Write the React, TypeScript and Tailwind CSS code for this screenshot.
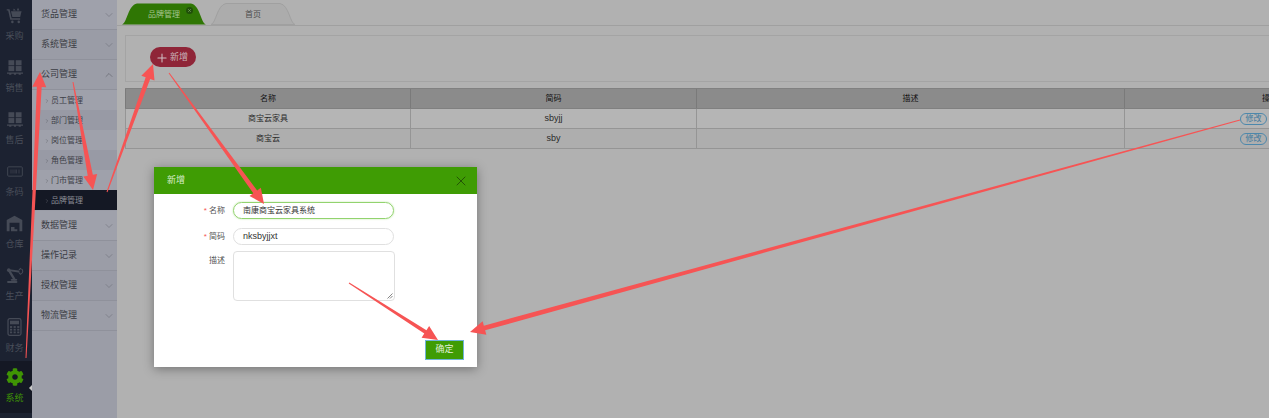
import { ChevronDown, ChevronRight, ChevronUp, Plus, X } from "lucide-react";
import { FaCog } from "react-icons/fa";

const font = { fontFamily: '"Liberation Sans", "Noto Sans CJK SC", sans-serif' };

function Cart() {
  return (
    <svg width="17" height="17" viewBox="0 0 24 24" fill="#454a56">
      <path d="M1 3h4l3 13h12v2H6L3 5H1z" />
      <path d="M7 6h15l-2 8H9zM11 2l3 3h-4zM17 1l2 4h-4z" />
      <circle cx="9" cy="21" r="1.8" />
      <circle cx="18" cy="21" r="1.8" />
    </svg>
  );
}

function Pallet() {
  return (
    <svg width="16" height="17" viewBox="0 0 22 22" fill="#454a56">
      <rect x="2" y="1" width="8" height="7" />
      <rect x="12" y="1" width="8" height="7" />
      <rect x="2" y="9" width="8" height="7" />
      <rect x="12" y="9" width="8" height="7" />
      <path d="M0 18h22v1.5H19V21h-3v-1.5H12.5V21h-3v-1.5H6V21H3v-1.5H0z" />
    </svg>
  );
}

function Barcode() {
  return (
    <svg width="16" height="13" viewBox="0 0 24 16" fill="none" stroke="#454a56">
      <rect x="1" y="1" width="22" height="14" rx="1.5" strokeWidth="1.3" />
      <path d="M6 5v6M9 5v6M12 5v6M14 5v6M18 5v6" strokeWidth="1" />
    </svg>
  );
}

function Warehouse() {
  return (
    <svg width="17" height="17" viewBox="0 0 24 24" fill="#454a56">
      <path d="M12 1 23 7v16h-4V11H5v12H1V7z" />
      <path d="M7 17h5v6H7zM12 20h4v3h-4z" />
    </svg>
  );
}

function Robot() {
  return (
    <svg width="18" height="18" viewBox="0 0 26 26" fill="none" stroke="#454a56" strokeLinecap="round">
      <path d="M4 6 12 19" strokeWidth="3.4" />
      <path d="M4 6 18 8" strokeWidth="2.8" />
      <circle cx="4" cy="6" r="2.6" fill="#454a56" strokeWidth="0" />
      <path d="M3 23h12" strokeWidth="3" />
      <path d="M8 20h7" strokeWidth="2.4" />
      <path d="M21 3.5a4.4 4.4 0 0 1 0 8.5M21 3.5l-2 2M21 12l-2-2" strokeWidth="1.5" />
    </svg>
  );
}

function Calc() {
  return (
    <svg width="15" height="18" viewBox="0 0 16 20" fill="#454a56">
      <rect x="0.8" y="0.8" width="14.4" height="18.4" rx="2" fill="none" stroke="#454a56" strokeWidth="1.4" />
      <rect x="3" y="3" width="10" height="4" />
      {[3, 7, 11].map((x) =>
        [9, 12, 15].map((y) => <rect key={`${x}-${y}`} x={x} y={y} width="2.4" height="2" />),
      )}
    </svg>
  );
}

const railItems = [
  { label: "采购", icon: <Cart /> },
  { label: "销售", icon: <Pallet /> },
  { label: "售后", icon: <Pallet /> },
  { label: "条码", icon: <Barcode /> },
  { label: "仓库", icon: <Warehouse /> },
  { label: "生产", icon: <Robot /> },
  { label: "财务", icon: <Calc /> },
];

function MenuRow({ label, open, shade }: { label: string; open?: boolean; shade: string }) {
  return (
    <div className={`flex h-[30px] items-center justify-between border-b border-[#8f919b] pl-[9px] pr-[2px] text-[9px] text-[#3a3c44] ${shade}`}>
      <span>{label}</span>
      {open ? (
        <ChevronUp size={12} strokeWidth={1.2} color="#5c5e66" />
      ) : (
        <ChevronDown size={12} strokeWidth={1.2} color="#6f717a" />
      )}
    </div>
  );
}

function SubRow({ label, active, shade }: { label: string; active?: boolean; shade: string }) {
  return (
    <div className={`flex h-5 items-center pl-[12px] pt-px text-[8px] ${active ? "bg-[#141824] text-[#8a8c94]" : `${shade} text-[#3e4048]`}`}>
      <ChevronRight size={6} strokeWidth={1.2} />
      <span className="ml-[1px]">{label}</span>
    </div>
  );
}

function Tab({ label, active }: { label: string; active?: boolean }) {
  return (
    <div className="relative flex h-[22px] w-[84px] items-center justify-center pt-px">
      <svg width="84" height="22" viewBox="0 0 84 22" className="absolute inset-0">
        <path
          d="M0 21.5C5 20.5 6 2 15 0.5H69C78 2 79 20.5 84 21.5Z"
          fill={active ? "#2f7604" : "#acacac"}
          stroke={active ? "none" : "#a0a0a0"}
        />
      </svg>
      <span className={`relative text-[8px] ${active ? "text-[#a4c48f]" : "text-[#4c4c4c]"}`}>{label}</span>
      {active && (
        <span className="absolute right-[13px] top-[4px] flex size-[7px] items-center justify-center rounded-full bg-[#20500a]">
          <X size={5} strokeWidth={2} color="#a4c48f" />
        </span>
      )}
    </div>
  );
}

function Row({ name, code }: { name: string; code: string }) {
  return (
    <div className="grid h-5 grid-cols-[286px_286px_428px_290px] items-center border-b border-[#959595] text-center text-[8px] text-[#2a2a2a]">
      <span className="flex h-full items-center justify-center border-l border-r border-[#959595]">{name}</span>
      <span className="flex h-full items-center justify-center border-r border-[#959595] text-[9px]">{code}</span>
      <span className="h-full border-r border-[#959595]" />
      <span className="flex h-full items-center pl-[115px]">
        <span className="flex h-[12px] w-[27px] items-center justify-center rounded-full border border-[#4d88ac] text-[8px] text-[#3f7a9e]">修改</span>
      </span>
    </div>
  );
}

// tapered annotation arrow, thin at the tail and thick behind the head
function Arrow({ x1, y1, x2, y2, head = 15, wing = 7, neck = 2.4 }: { x1: number; y1: number; x2: number; y2: number; head?: number; wing?: number; neck?: number }) {
  const len = Math.hypot(x2 - x1, y2 - y1);
  const ux = (x2 - x1) / len;
  const uy = (y2 - y1) / len;
  const bx = x2 - ux * head;
  const by = y2 - uy * head;
  const p = (d: number) => `${bx - uy * d},${by + ux * d}`;
  const t = (d: number) => `${x1 - uy * d},${y1 + ux * d}`;
  const points = [t(0.5), p(neck), p(wing), `${x2},${y2}`, p(-wing), p(-neck), t(-0.5)].join(" ");
  return <polygon points={points} fill="#f65454" />;
}

export default function App() {
  return (
    <div className="relative flex h-[418px] w-[1269px] overflow-hidden bg-[#b1b1b1]" style={font}>
      <aside className="flex h-full w-8 shrink-0 flex-col overflow-hidden bg-[#1c2231]">
        <div className="-mt-[3px]">
          {railItems.map((item) => (
            <div key={item.label} className="flex h-[52px] flex-col items-center justify-between pb-[7px] pr-[3px] pt-[6px] text-[9px] text-[#4a4f5a]">
              <div className="flex h-6 items-center justify-center">{item.icon}</div>
              <span className="leading-[12px]">{item.label}</span>
            </div>
          ))}
          <div className="relative flex h-[52px] flex-col items-center justify-between bg-[#141824] pb-[9px] pr-[3px] pt-[7px] text-[9px] text-[#3f9404]">
            <FaCog size={18} color="#3f9404" />
            <span className="leading-[12px]">系统</span>
            <span className="absolute right-0 top-[24px] h-0 w-0 border-y-[3px] border-r-[3px] border-y-transparent border-r-[#c8c8c8]" />
          </div>
        </div>
      </aside>

      <nav className="h-full w-[85px] shrink-0 bg-[#9b9da7]">
        <MenuRow label="货品管理" shade="bg-[#9fa1ab]" />
        <MenuRow label="系统管理" shade="bg-[#9a9ca6]" />
        <MenuRow label="公司管理" open shade="bg-[#9b9da7]" />
        <SubRow label="员工管理" shade="bg-[#9fa1ab]" />
        <SubRow label="部门管理" shade="bg-[#989aa5]" />
        <SubRow label="岗位管理" shade="bg-[#9fa1ab]" />
        <SubRow label="角色管理" shade="bg-[#989aa5]" />
        <SubRow label="门市管理" shade="bg-[#9fa1ab]" />
        <SubRow label="品牌管理" active shade="" />
        <div className="mt-px">
          <MenuRow label="数据管理" shade="bg-[#9fa1ab]" />
          <MenuRow label="操作记录" shade="bg-[#9b9da7]" />
          <MenuRow label="授权管理" shade="bg-[#989aa5]" />
          <MenuRow label="物流管理" shade="bg-[#9b9da7]" />
        </div>
      </nav>

      <main className="min-w-0 flex-1 pl-[5px]">
        <div className="-ml-[5px] flex h-[26px] items-end gap-[5px] border-b border-[#a0a0a0] pl-[5px]">
          <Tab label="品牌管理" active />
          <Tab label="首页" />
        </div>
        <div className="ml-[3px] mt-[9px] h-[47px] w-[1300px] border border-[#a4a4a4] pl-[24px] pt-[11px]">
          <div className="flex h-[20px] w-[46px] items-center rounded-full bg-[#8f2538] pl-[5px] pt-px text-[9px] text-[#c9b4b8]">
            <Plus size={14} strokeWidth={1.8} color="#d0c0c3" />
            <span className="ml-px">新增</span>
          </div>
        </div>
        <div className="ml-[3px] mt-[6px] w-[1290px]">
          <div className="grid h-[21px] grid-cols-[286px_286px_428px_290px] items-center border-b border-t border-[#808080] bg-[#8b8b8b] text-center text-[8px] text-[#111]">
            <span className="flex h-full items-center justify-center border-l border-r border-[#7a7a7a]">名称</span>
            <span className="flex h-full items-center justify-center border-r border-[#7a7a7a]">简码</span>
            <span className="flex h-full items-center justify-center border-r border-[#7a7a7a]">描述</span>
            <span>操作</span>
          </div>
          <div className="bg-[#b5b5b5]">
            <Row name="商宝云家具" code="sbyjj" />
          </div>
          <div className="bg-[#aeaeae]">
            <Row name="商宝云" code="sby" />
          </div>
        </div>
      </main>

      <div className="absolute left-[154px] top-[167px] flex h-[200px] w-[323px] flex-col bg-white shadow-[0_2px_10px_rgba(0,0,0,0.35)]">
        <div className="flex h-[27px] shrink-0 items-center justify-between bg-[#3f9c04] pl-[13px] pr-[8px] pt-px text-[9px] text-[#d9ecce]">
          <span>新增</span>
          <X size={16} strokeWidth={1.3} color="#1f4a06" />
        </div>
        <div className="flex flex-col pl-[8px] pt-[8px] text-[8px] text-[#555]">
          <div className="flex h-[17px] items-center">
            <span className="w-[63px] text-right"><span className="text-[#f65454]">* </span>名称</span>
            <span className="ml-[8px] flex h-[17px] w-[161px] items-center rounded-full border border-[#92d36e] pl-[9px] text-[#333] shadow-[0_0_2px_#b9e5a0]">南康商宝云家具系统</span>
          </div>
          <div className="mt-[9px] flex h-[17px] items-center">
            <span className="w-[63px] text-right"><span className="text-[#f65454]">* </span>简码</span>
            <span className="ml-[8px] flex h-[17px] w-[161px] items-center rounded-full border border-[#e0e0e0] pl-[9px] text-[9px] text-[#333]">nksbyjjxt</span>
          </div>
          <div className="mt-[6px] flex items-start">
            <span className="mt-[4px] w-[63px] text-right">描述</span>
            <span className="relative ml-[8px] h-[50px] w-[162px] rounded-[4px] border border-[#e0e0e0]">
              <svg width="6" height="6" viewBox="0 0 6 6" className="absolute bottom-[1px] right-[1px]" stroke="#666" strokeWidth="0.8">
                <path d="M0.5 5.5 5.5 0.5M3 5.5 5.5 3" />
              </svg>
            </span>
          </div>
        </div>
        <div className="mt-auto flex justify-end pb-[7px] pr-[13px]">
          <div className="flex h-5 w-[39px] items-center justify-center border border-[#6fb4d8] bg-[#3f9c04] text-[9px] text-[#e0f0d6]">确定</div>
        </div>
      </div>

      <svg width="1269" height="418" className="pointer-events-none absolute inset-0">
        <Arrow x1={26} y1={358} x2={40} y2={72} />
        <Arrow x1={73} y1={82} x2={93} y2={190} neck={2.6} />
        <Arrow x1={107} y1={192} x2={153} y2={64} />
        <Arrow x1={169} y1={73} x2={264} y2={204} />
        <Arrow x1={1240} y1={120} x2={470} y2={332} />
        <Arrow x1={349} y1={283} x2={438} y2={340} neck={2} />
      </svg>
    </div>
  );
}
